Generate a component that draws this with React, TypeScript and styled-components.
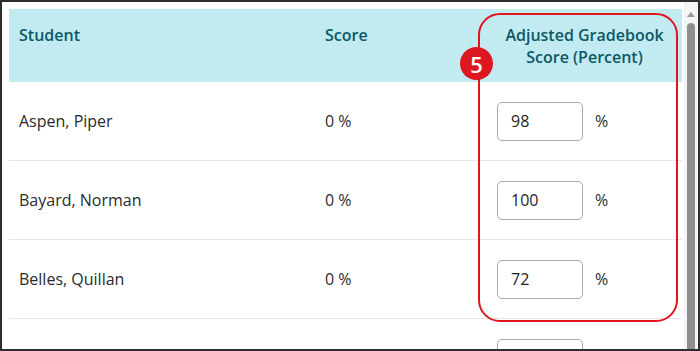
import React from "react";
import styled, { createGlobalStyle } from "styled-components";

const Global = createGlobalStyle`
  html, body { margin: 0; padding: 0; background: #fff; }
  body { font-family: "Open Sans", "Lato", sans-serif; }
`;

const Frame = styled.div`
  box-sizing: border-box;
  width: 700px;
  height: 351px;
  border: 2px solid #2e2e2e;
  display: flex;
  overflow: hidden;
  background: #fff;
`;

const Viewport = styled.div`
  flex: 1;
  padding: 7px 0 0 7px;
  position: relative;
  overflow: hidden;
`;

const Grid = styled.div`
  display: grid;
  grid-template-columns: 306px 172px 195px;
`;

const HeadCell = styled.div<{ $center?: boolean }>`
  background: #c1ebf0;
  height: 73px;
  box-sizing: border-box;
  padding: 15px 10px 0 10px;
  color: #0d5866;
  font-weight: 600;
  font-size: 16px;
  line-height: 22px;
  text-align: ${(p) => (p.$center ? "center" : "left")};
`;

const Cell = styled.div`
  height: 79px;
  box-sizing: border-box;
  border-bottom: 1px solid #e6e6e6;
  padding: 0 10px;
  display: flex;
  align-items: center;
  gap: 12px;
  color: #2b2b2b;
  font-size: 16px;
`;

const ScoreInput = styled.div`
  width: 86px;
  height: 39px;
  box-sizing: border-box;
  border: 1px solid #a9a9a9;
  border-radius: 5px;
  padding-left: 13px;
  display: flex;
  align-items: center;
  font-size: 16px;
  color: #1e1e1e;
`;

const Highlight = styled.div`
  position: absolute;
  left: 476px;
  top: 11px;
  width: 200px;
  height: 309px;
  box-sizing: border-box;
  border: 2px solid #e3131e;
  border-radius: 22px;
  pointer-events: none;
`;

const Badge = styled.div`
  position: absolute;
  left: 458px;
  top: 45px;
  width: 33px;
  height: 33px;
  border-radius: 50%;
  background: #dc1720;
  color: #fff;
  font-weight: 600;
  font-size: 22px;
  display: flex;
  align-items: center;
  justify-content: center;
`;

const Scrollbar = styled.div`
  width: 14px;
  background: #f4f4f4;
  position: relative;
  display: flex;
  flex-direction: column;
  align-items: center;
  padding-top: 10px;
  box-sizing: border-box;
`;

const Arrow = styled.div`
  width: 0;
  height: 0;
  border-left: 4px solid transparent;
  border-right: 4px solid transparent;
  border-bottom: 5px solid #9a9a9a;
`;

const Thumb = styled.div`
  margin-top: 6px;
  width: 8px;
  flex: 1;
  background: #8f8f8f;
  border-radius: 4px 4px 0 0;
`;

const rows = [
  { name: "Aspen, Piper", score: "0 %", adj: "98" },
  { name: "Bayard, Norman", score: "0 %", adj: "100" },
  { name: "Belles, Quillan", score: "0 %", adj: "72" },
  { name: "", score: "", adj: "" },
];

export default function App() {
  return (
    <>
      <Global />
      <Frame>
        <Viewport>
          <Grid>
            <HeadCell>Student</HeadCell>
            <HeadCell>Score</HeadCell>
            <HeadCell $center>
              Adjusted Gradebook
              <br />
              Score (Percent)
            </HeadCell>
            {rows.map((r, i) => (
              <React.Fragment key={i}>
                <Cell>{r.name}</Cell>
                <Cell>{r.score}</Cell>
                <Cell>
                  <ScoreInput>{r.adj}</ScoreInput>
                  {r.adj !== "" && <span>%</span>}
                </Cell>
              </React.Fragment>
            ))}
          </Grid>
          <Highlight />
          <Badge>5</Badge>
        </Viewport>
        <Scrollbar>
          <Arrow />
          <Thumb />
        </Scrollbar>
      </Frame>
    </>
  );
}
